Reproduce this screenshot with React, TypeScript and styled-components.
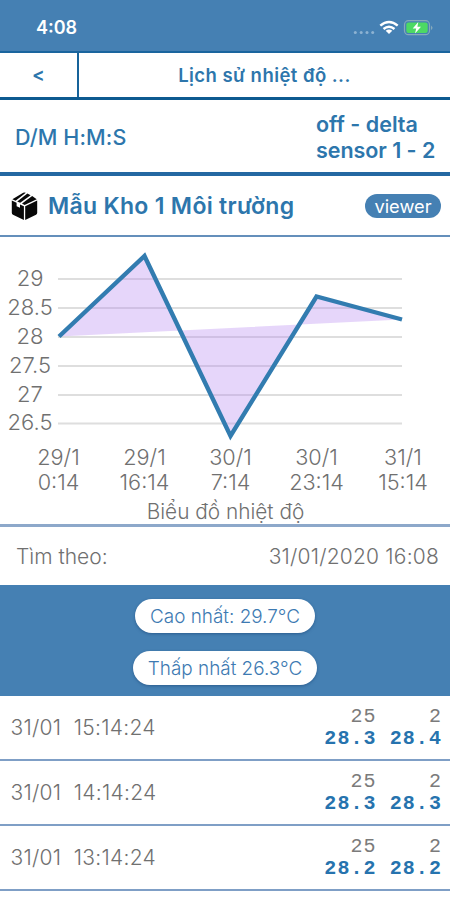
import React from "react";
import styled, { createGlobalStyle } from "styled-components";

const GlobalStyle = createGlobalStyle`
  * { box-sizing: border-box; }
  body {
    margin: 0;
    background: #fff;
    font-family: Inter, "Noto Sans", sans-serif;
    color: #707070;
  }
`;

const BLUE = "#4580b3";
const INK = "#2d76ac";
const RULE = "#7f9fc6";

const Screen = styled.main`
  width: 450px;
  height: 900px;
  overflow: hidden;
  background: #fff;
  display: flex;
  flex-direction: column;
`;

const Label = styled.span<{ $size: number; $weight?: number; $spacing?: number; $line?: number }>`
  font-size: ${(p) => p.$size}px;
  font-weight: ${(p) => p.$weight ?? 400};
  letter-spacing: ${(p) => p.$spacing ?? 0}px;
  line-height: ${(p) => p.$line ?? 26}px;
  white-space: pre;
`;

const StatusBar = styled.header`
  height: 53px;
  flex: none;
  background: ${BLUE};
  border-bottom: 2px solid #1a659e;
  color: #fff;
  display: flex;
  align-items: center;
  justify-content: space-between;
  padding: 5px 17px 0 36px;
`;

const NavBar = styled.nav`
  height: 47px;
  flex: none;
  display: flex;
  color: ${INK};
  border-bottom: 3px solid #0d5a90;
`;

const BackButton = styled.button`
  width: 79px;
  border: 0;
  border-right: 2px solid #17639a;
  background: none;
  padding: 0 0 1px;
  color: inherit;
  font-family: inherit;
`;

const NavTitle = styled.div`
  flex: 1;
  display: flex;
  align-items: center;
  justify-content: center;
`;

const ColumnHeader = styled.section`
  height: 76px;
  flex: none;
  display: flex;
  align-items: center;
  justify-content: space-between;
  padding: 1px 15px 0;
  color: ${INK};
  border-bottom: 4px solid #2468a2;
`;

const SensorLabels = styled.div`
  width: 119px;
  display: flex;
  flex-direction: column;
`;

const DeviceRow = styled.section`
  height: 61px;
  flex: none;
  display: flex;
  align-items: center;
  padding: 0 9px 0 11px;
  color: ${INK};
  border-bottom: 2px solid #648fbb;
`;

const DeviceName = styled.div`
  flex: 1;
  padding-left: 10px;
`;

const Badge = styled.div`
  width: 76px;
  height: 24px;
  border-radius: 12px;
  background: ${BLUE};
  color: #fff;
  display: flex;
  justify-content: center;
`;

const ChartPanel = styled.section`
  height: 290px;
  flex: none;
  border-bottom: 3px solid #8da8ca;
`;

const SearchRow = styled.section`
  height: 58px;
  flex: none;
  display: flex;
  align-items: center;
  justify-content: space-between;
  padding: 1px 11px 0 16px;
`;

const Summary = styled.section`
  height: 111px;
  flex: none;
  background: ${BLUE};
  display: flex;
  flex-direction: column;
  align-items: center;
  gap: 18px;
  padding-top: 14px;
`;

const Pill = styled.div<{ $width: number }>`
  width: ${(p) => p.$width}px;
  height: 34px;
  border-radius: 17px;
  background: #fff;
  color: #3d7ab2;
  display: flex;
  align-items: center;
  justify-content: center;
  padding-top: 1px;
  box-shadow: 0 1px 3px rgba(20, 60, 110, 0.5);
`;

const Reading = styled.article`
  height: 65px;
  flex: none;
  display: flex;
  align-items: center;
  justify-content: space-between;
  padding: 1px 8px 0 10.5px;
  border-bottom: 2px solid ${RULE};
`;

const Values = styled.div`
  display: flex;
  flex-direction: column;
  align-items: flex-end;
`;

const Mono = styled.span<{ $bold?: boolean }>`
  font-family: "Liberation Mono", monospace;
  font-size: 20px;
  letter-spacing: 1.07px;
  line-height: 22px;
  white-space: pre;
  font-weight: ${(p) => (p.$bold ? 700 : 400)};
  color: ${(p) => (p.$bold ? "#2673ae" : "#7b7b7b")};
`;

const StatusIcons = () => (
  <svg width="84" height="24" viewBox="349 16 84 24">
    {[355.3, 361.2, 367, 372.7].map((x) => (
      <circle key={x} cx={x} cy="32.4" r="1.5" fill="#8db2d2" />
    ))}
    <g fill="none" stroke="#fff" strokeWidth="2.5">
      <path d="M380.3 25.6Q389 18.4 397.7 25.6" />
      <path d="M383.5 29Q389 24.5 394.5 29" />
    </g>
    <path d="M385.7 30.8Q389 28.4 392.3 30.8L389 34Z" fill="#fff" />
    <rect x="404.5" y="20.7" width="25" height="14" rx="4" fill="none" stroke="#86a9bb" strokeWidth="1.2" />
    <rect x="406.3" y="22.4" width="21.4" height="10.6" rx="2.2" fill="#4cd964" />
    <path d="M431 25.4Q434 27.7 431 30Z" fill="#86a9bb" />
    <path d="M418.3 22L412.7 28.6H416.2L415 33.4L421 26.7H417.4Z" fill="#fff" />
  </svg>
);

const PackageIcon = () => (
  <svg width="27" height="30" viewBox="0 0 27 30">
    <g fill="#080808">
      <path d="M0.8 9.6L5.6 11.8V15.2L9 16.8V13.4L12.9 15.2V29L2 23.8Q0.8 23.2 0.8 21.8Z" />
      <path d="M14.2 15.2L26.2 9.6V21.8Q26.2 23.2 25 23.8L14.2 29Z" />
      <path d="M1.4 8.2L12.2 1.8Q13.5 1 14.8 1.8L4.6 9.7Z" />
      <path d="M6.2 10.4L16.4 2.5L19.6 4.2L9.2 11.8Z" />
      <path d="M11 12.6L21.2 5L25.7 8.2L13.6 13.9Z" />
    </g>
  </svg>
);

const yTicks: [string, number][] = [
  ["29", 279], ["28.5", 308], ["28", 337], ["27.5", 366], ["27", 395], ["26.5", 423.5],
];
const xTicks: [string, string, number][] = [
  ["29/1", "0:14", 58.5], ["29/1", "16:14", 144.5], ["30/1", "7:14", 230.5], ["30/1", "23:14", 316.5], ["31/1", "15:14", 403],
];

const Chart = () => (
  <svg width="450" height="287" viewBox="0 237 450 287" fontFamily="Inter, sans-serif" fill="#707070">
    {yTicks.map(([, y]) => (
      <path key={y} d={`M58 ${y}H402`} stroke="#dedede" strokeWidth="1.8" />
    ))}
    <path d="M59 336.5L144.5 256L230.5 436L316.5 296.5L402 319.5Z" fill="#b78af0" fillOpacity="0.35" />
    <path d="M59 336.5L144.5 256L230.5 436L316.5 296.5L402 319.5" fill="none" stroke="#327cb0" strokeWidth="4.4" />
    {yTicks.map(([t, y]) => (
      <text key={t} x="30" y={y + 6.5} fontSize="22" fontWeight="300" textAnchor="middle">{t}</text>
    ))}
    {xTicks.map(([d, t, x]) => (
      <g key={x} fontSize="21.7" fontWeight="300" textAnchor="middle">
        <text x={x} y="464.5">{d}</text>
        <text x={x} y="490">{t}</text>
      </g>
    ))}
    <text x="225.5" y="519" fontSize="20.8" fontWeight="300" textAnchor="middle">Biểu đồ nhiệt độ</text>
  </svg>
);

const readings = [
  { time: "31/01  15:14:24", top: "25    2", bottom: "28.3 28.4" },
  { time: "31/01  14:14:24", top: "25    2", bottom: "28.3 28.3" },
  { time: "31/01  13:14:24", top: "25    2", bottom: "28.2 28.2" },
];

export default function App() {
  return (
    <>
      <GlobalStyle />
      <Screen>
        <StatusBar>
          <Label $size={18} $weight={600}>4:08</Label>
          <StatusIcons />
        </StatusBar>
        <NavBar>
          <BackButton><Label $size={19} $weight={600}>&lt;</Label></BackButton>
          <NavTitle><Label $size={18.5} $weight={600} $spacing={0.45}>Lịch sử nhiệt độ ...</Label></NavTitle>
        </NavBar>
        <ColumnHeader>
          <Label $size={21.5} $weight={500} $spacing={0.1}>D/M H:M:S</Label>
          <SensorLabels>
            <Label $size={21.5} $weight={600}>off - delta</Label>
            <Label $size={21.5} $weight={600} $spacing={-0.05}>sensor 1 - 2</Label>
          </SensorLabels>
        </ColumnHeader>
        <DeviceRow>
          <PackageIcon />
          <DeviceName><Label $size={23} $weight={600} $spacing={0.3}>Mẫu Kho 1 Môi trường</Label></DeviceName>
          <Badge><Label $size={18.3} $line={24}>viewer</Label></Badge>
        </DeviceRow>
        <ChartPanel><Chart /></ChartPanel>
        <SearchRow>
          <Label $size={21} $weight={300}>Tìm theo:</Label>
          <Label $size={21} $weight={300} $spacing={0.2}>31/01/2020 16:08</Label>
        </SearchRow>
        <Summary>
          <Pill $width={180}><Label $size={18.9} $weight={300}>Cao nhất: 29.7°C</Label></Pill>
          <Pill $width={184}><Label $size={18.9} $weight={300}>Thấp nhất 26.3°C</Label></Pill>
        </Summary>
        {readings.map((r) => (
          <Reading key={r.time}>
            <Label $size={21} $weight={300} $spacing={0.27}>{r.time}</Label>
            <Values>
              <Mono>{r.top}</Mono>
              <Mono $bold>{r.bottom}</Mono>
            </Values>
          </Reading>
        ))}
      </Screen>
    </>
  );
}
